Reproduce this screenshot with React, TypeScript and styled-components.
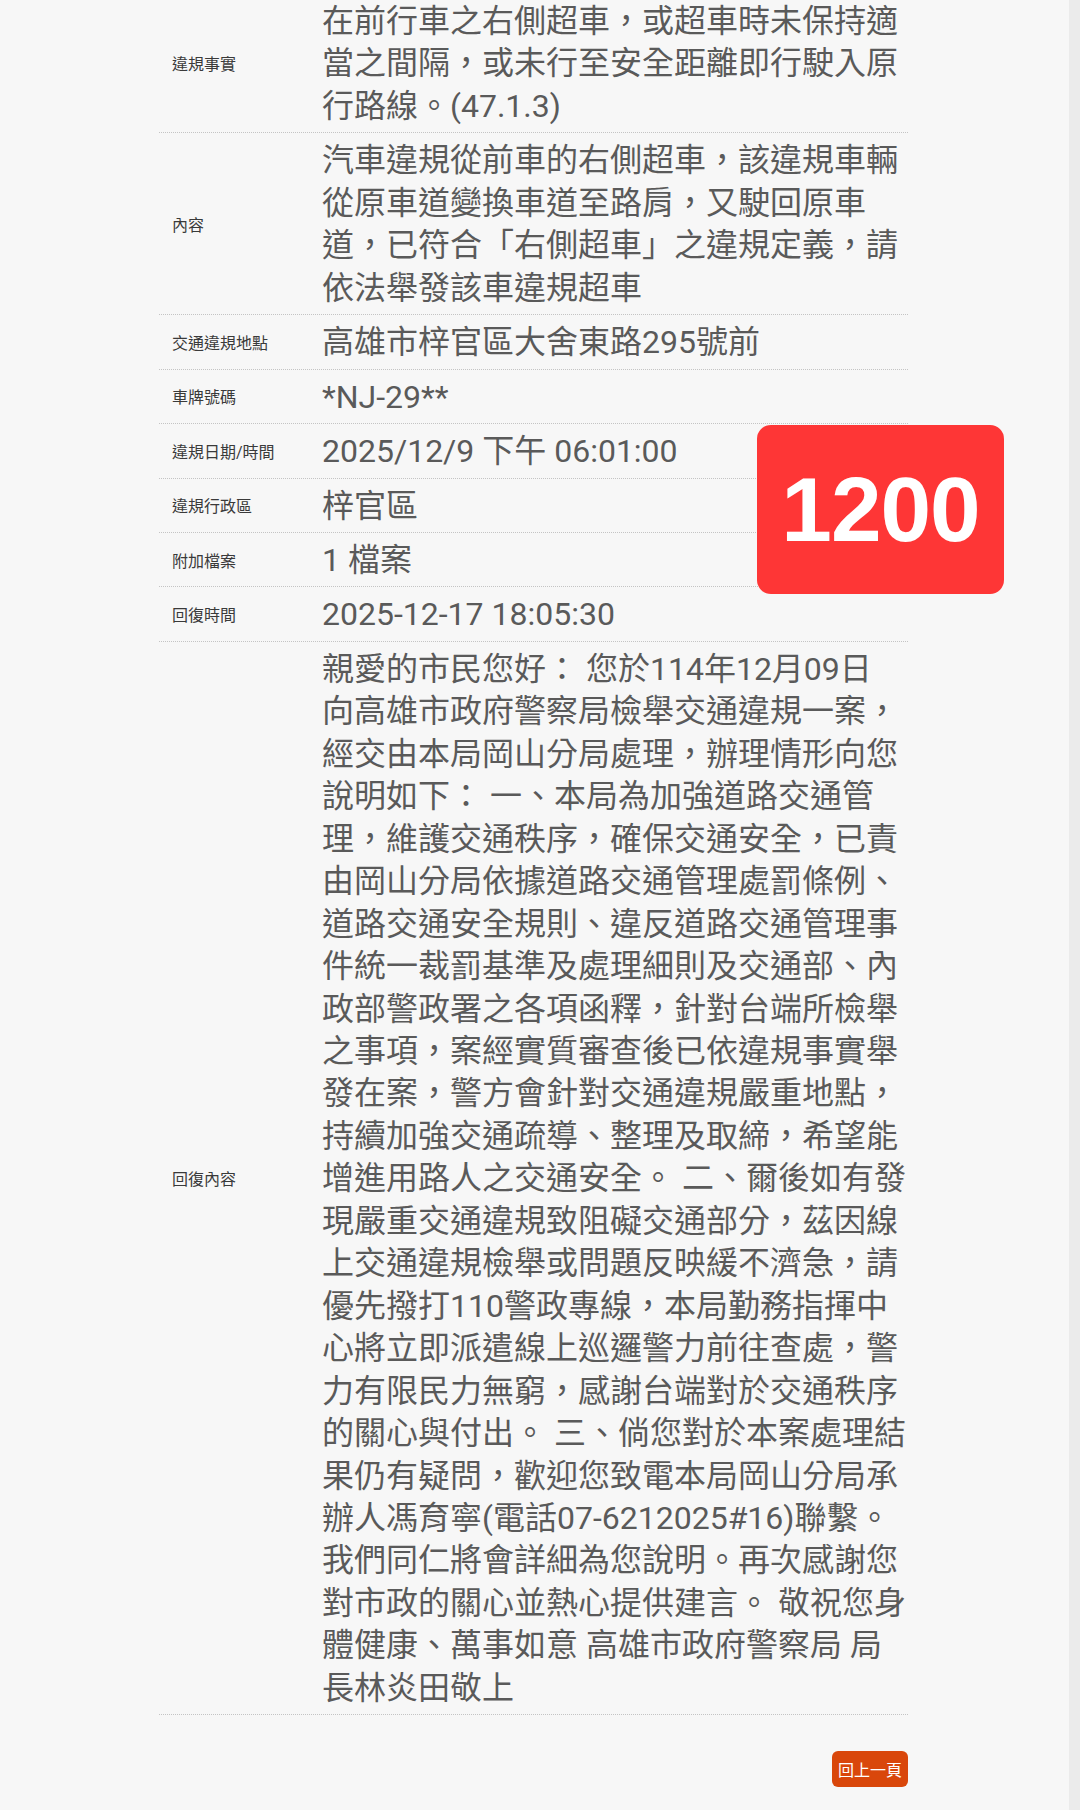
import React from 'react';
import styled, { createGlobalStyle } from 'styled-components';

const GlobalStyle = createGlobalStyle`
  html, body {
    margin: 0;
    padding: 0;
    background: #f7f7f7;
  }
  body {
    font-family: Roboto, "Noto Sans CJK TC", "Noto Sans", sans-serif;
  }
`;

type Row = { label: string; lines: string[] };

const rows: Row[] = [
  {
    label: '違規事實',
    lines: [
      '在前行車之右側超車，或超車時未保持適',
      '當之間隔，或未行至安全距離即行駛入原',
      '行路線。(47.1.3)',
    ],
  },
  {
    label: '內容',
    lines: [
      '汽車違規從前車的右側超車，該違規車輛',
      '從原車道變換車道至路肩，又駛回原車',
      '道，已符合「右側超車」之違規定義，請',
      '依法舉發該車違規超車',
    ],
  },
  { label: '交通違規地點', lines: ['高雄市梓官區大舍東路295號前'] },
  { label: '車牌號碼', lines: ['*NJ-29**'] },
  { label: '違規日期/時間', lines: ['2025/12/9 下午 06:01:00'] },
  { label: '違規行政區', lines: ['梓官區'] },
  { label: '附加檔案', lines: ['1 檔案'] },
  { label: '回復時間', lines: ['2025-12-17 18:05:30'] },
  {
    label: '回復內容',
    lines: [
      '親愛的市民您好： 您於114年12月09日',
      '向高雄市政府警察局檢舉交通違規一案，',
      '經交由本局岡山分局處理，辦理情形向您',
      '說明如下： 一、本局為加強道路交通管',
      '理，維護交通秩序，確保交通安全，已責',
      '由岡山分局依據道路交通管理處罰條例、',
      '道路交通安全規則、違反道路交通管理事',
      '件統一裁罰基準及處理細則及交通部、內',
      '政部警政署之各項函釋，針對台端所檢舉',
      '之事項，案經實質審查後已依違規事實舉',
      '發在案，警方會針對交通違規嚴重地點，',
      '持續加強交通疏導、整理及取締，希望能',
      '增進用路人之交通安全。 二、爾後如有發',
      '現嚴重交通違規致阻礙交通部分，茲因線',
      '上交通違規檢舉或問題反映緩不濟急，請',
      '優先撥打110警政專線，本局勤務指揮中',
      '心將立即派遣線上巡邏警力前往查處，警',
      '力有限民力無窮，感謝台端對於交通秩序',
      '的關心與付出。 三、倘您對於本案處理結',
      '果仍有疑問，歡迎您致電本局岡山分局承',
      '辦人馮育寧(電話07-6212025#16)聯繫。',
      '我們同仁將會詳細為您說明。再次感謝您',
      '對市政的關心並熱心提供建言。 敬祝您身',
      '體健康、萬事如意 高雄市政府警察局 局',
      '長林炎田敬上',
    ],
  },
];

const App: React.FC = () => {
  return (
    <Page>
      <GlobalStyle />
      <Main>
        <Table>
          {rows.map((row) => (
            <TableRow key={row.label}>
              <LabelCell>{row.label}</LabelCell>
              <ValueCell>
                {row.lines.map((line, i) => (
                  <Line key={i}>{line}</Line>
                ))}
              </ValueCell>
            </TableRow>
          ))}
        </Table>
        <ButtonBar>
          <BackButton type="button">回上一頁</BackButton>
        </ButtonBar>
        <Badge>1200</Badge>
      </Main>
      <ScrollTrack />
    </Page>
  );
};

const Page = styled.div`
  display: flex;
  width: 1080px;
  height: 1810px;
  overflow: hidden;
  background: #f7f7f7;
`;

const Main = styled.div`
  position: relative;
  flex: 1;
  padding-left: 159px;
`;

const Table = styled.div`
  width: 749px;
  margin-top: -6px;
`;

const TableRow = styled.div`
  display: grid;
  grid-template-columns: 150px 1fr;
`;

const LabelCell = styled.div`
  display: flex;
  align-items: center;
  padding: 0 0 0 13px;
  border-bottom: 1px dotted #c4c4c4;
  margin-right: 1px;
  font-size: 16px;
  color: #3a3a3a;
  white-space: nowrap;
`;

const ValueCell = styled.div`
  padding: 6px 0 5px 13px;
  border-bottom: 1px dotted #c4c4c4;
  font-size: 32px;
  line-height: 42.45px;
  color: #5a5a5a;
`;

const Line = styled.div`
  white-space: nowrap;
`;

const ButtonBar = styled.div`
  display: flex;
  justify-content: flex-end;
  width: 749px;
  padding-top: 36px;
`;

const BackButton = styled.button`
  height: 36px;
  padding: 0 6px;
  border: none;
  border-radius: 6px;
  background: #d9470b;
  color: #fff;
  font-family: Roboto, "Noto Sans CJK TC", sans-serif;
  font-size: 16px;
`;

const Badge = styled.div`
  position: absolute;
  left: 757px;
  top: 425px;
  width: 247px;
  height: 169px;
  display: flex;
  align-items: center;
  justify-content: center;
  border-radius: 14px;
  background: #fe3636;
  color: #fff;
  font-family: "Liberation Sans", Arial, sans-serif;
  font-weight: 700;
  font-size: 91px;
  letter-spacing: -1px;
`;

const ScrollTrack = styled.div`
  width: 11px;
  background: #ebebeb;
`;

export default App;
